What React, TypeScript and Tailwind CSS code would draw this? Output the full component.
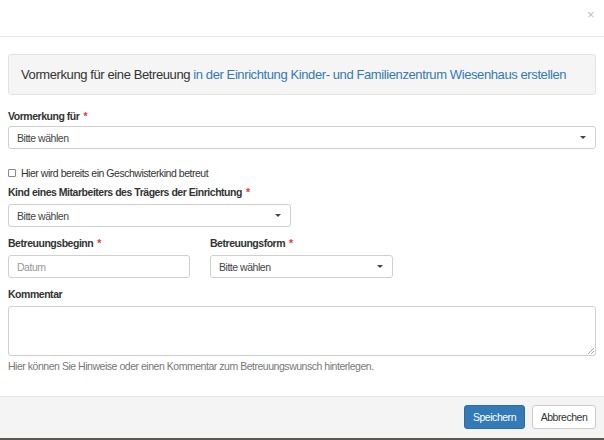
import React from "react";

function Caret() {
  return (
    <svg width="6" height="3" viewBox="0 0 6 3" className="shrink-0">
      <path d="M0 0h6L3 3z" fill="#444" />
    </svg>
  );
}

function Select({ className = "" }: { className?: string }) {
  return (
    <div
      className={`h-[23px] flex items-center justify-between pl-[8px] pr-[9px] border border-[#cfcfcf] rounded-[3px] bg-white text-[#444] ${className}`}
    >
      <span>Bitte wählen</span>
      <Caret />
    </div>
  );
}

function Label({ children, required }: { children: React.ReactNode; required?: boolean }) {
  return (
    <div className="font-bold text-[#333] leading-[14px]">
      {children}
      {required && <span className="text-[#e33] ml-[4px]">*</span>}
    </div>
  );
}

export default function App() {
  return (
    <div
      className="w-[604px] h-[440px] bg-white flex flex-col text-[10.5px] leading-[14px] tracking-[-0.47px] text-[#333]"
      style={{ fontFamily: '"Liberation Sans", Arial, sans-serif' }}
    >
      <div className="h-[37px] border-b border-[#e5e5e5] flex justify-end pr-[10px] pt-[8px] shrink-0">
        <span className="text-[#c0c0c0] text-[13px] leading-[13px]">×</span>
      </div>

      <div className="flex-1 px-[8px] pt-[17px]">
        <div className="h-[41px] bg-[#f5f5f5] border border-[#e3e3e3] rounded-[3px] flex items-center pl-[12px] text-[13px] tracking-[-0.4px] whitespace-nowrap">
          <div>
            <span className="text-[#333]">Vormerkung für eine Betreuung </span>
            <span className="text-[#337ab7]">in der Einrichtung Kinder- und Familienzentrum Wiesenhaus erstellen</span>
          </div>
        </div>

        <div className="mt-[14px]">
          <Label required>Vormerkung für</Label>
          <Select className="mt-[3px] w-full" />
        </div>

        <label className="mt-[17px] flex items-center gap-[5px]">
          <span className="w-[8px] h-[8px] border border-[#888] rounded-[1px] bg-white" />
          <span>Hier wird bereits ein Geschwisterkind betreut</span>
        </label>

        <div className="mt-[5px]">
          <Label required>Kind eines Mitarbeiters des Trägers der Einrichtung</Label>
          <Select className="mt-[5px] w-[283px]" />
        </div>

        <div className="mt-[9px] flex gap-[20px]">
          <div className="w-[182px]">
            <Label required>Betreuungsbeginn</Label>
            <div className="mt-[5px] h-[23px] flex items-center pl-[8px] border border-[#cfcfcf] rounded-[3px] text-[#999]">
              Datum
            </div>
          </div>
          <div className="w-[183px]">
            <Label required>Betreuungsform</Label>
            <Select className="mt-[5px]" />
          </div>
        </div>

        <div className="mt-[9px]">
          <Label>Kommentar</Label>
          <div className="relative mt-[5px] h-[50px] border border-[#cfcfcf] rounded-[3px]">
            <svg width="6" height="6" className="absolute right-[1px] bottom-[1px]">
              <path d="M0 6L6 0M3 6L6 3" stroke="#aaa" strokeWidth="1" />
            </svg>
          </div>
          <div className="mt-[3px] text-[#777]">
            Hier können Sie Hinweise oder einen Kommentar zum Betreuungswunsch hinterlegen.
          </div>
        </div>
      </div>

      <div className="h-[44px] bg-[#f4f4f4] border-t border-[#e5e5e5] border-b-2 border-b-[#5a5a52] flex items-center justify-end gap-[7px] pr-[8px] pb-[2px] shrink-0">
        <button className="h-[24px] w-[61px] rounded-[3px] bg-[#337ab7] border border-[#2e6da4] text-white">
          Speichern
        </button>
        <button className="h-[24px] w-[64px] rounded-[3px] bg-white border border-[#ccc] text-[#333]">
          Abbrechen
        </button>
      </div>
    </div>
  );
}
